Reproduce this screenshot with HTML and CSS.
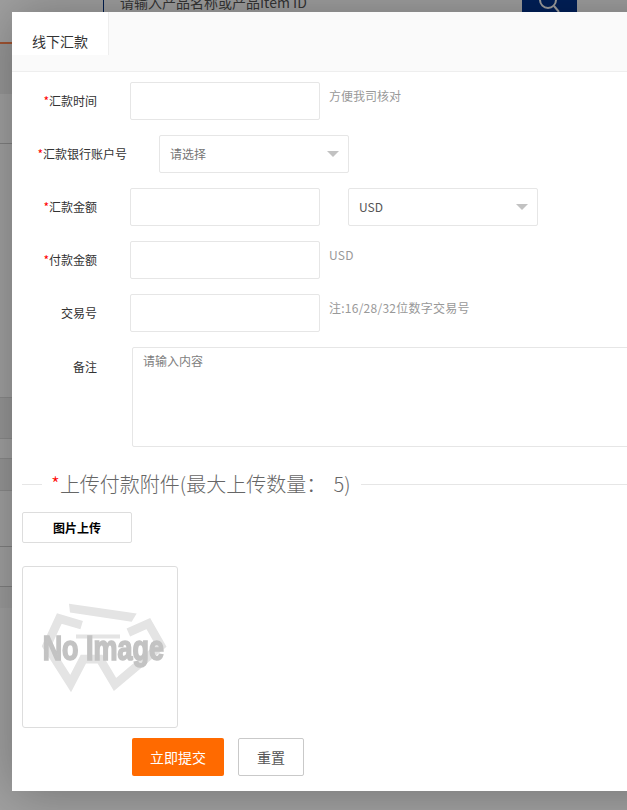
FILE: index.html
```html
<!DOCTYPE html>
<html lang="zh-CN">
<head>
<meta charset="utf-8">
<title>线下汇款</title>
<link rel="stylesheet" href="styles.css">
</head>
<body>
<div class="backdrop">
  <div class="search">
    <div class="search-box">请输入产品名称或产品Item ID</div>
    <div class="search-btn">
      <svg class="search-icon" viewBox="0 0 24 24"><circle cx="10" cy="0" r="8"/><path d="M16 6l5 6"/></svg>
    </div>
  </div>
  <div class="bg-accent"></div>
  <div class="bg-row bg-a"></div>
  <div class="bg-row bg-b"></div>
  <div class="bg-row bg-c"></div>
  <div class="bg-row bg-d"></div>
  <div class="bg-row bg-e"></div>
  <div class="bg-row bg-f"></div>
  <div class="bg-row bg-g"></div>
  <div class="bg-row bg-h"></div>
  <div class="bg-row bg-i"></div>
</div>
<div class="overlay"></div>
<div class="dialog">
  <div class="tabs"><div class="tab">线下汇款</div></div>
  <form class="form">
    <div class="row">
      <label class="label"><span class="req">*</span>汇款时间</label>
      <input class="input" type="text">
      <span class="hint">方便我司核对</span>
    </div>
    <div class="row">
      <label class="label label-wide"><span class="req">*</span>汇款银行账户号</label>
      <div class="select select-muted">请选择</div>
    </div>
    <div class="row">
      <label class="label"><span class="req">*</span>汇款金额</label>
      <input class="input" type="text">
      <div class="select select-side">USD</div>
    </div>
    <div class="row">
      <label class="label"><span class="req">*</span>付款金额</label>
      <input class="input" type="text">
      <span class="hint hint-num">USD</span>
    </div>
    <div class="row">
      <label class="label">交易号</label>
      <input class="input" type="text">
      <span class="hint hint-num">注:16/28/32位数字交易号</span>
    </div>
    <div class="row row-area">
      <label class="label label-area">备注</label>
      <textarea class="area" placeholder="请输入内容"></textarea>
    </div>
    <div class="legend">
      <span class="legend-line legend-short"></span>
      <span class="legend-text"><span class="req">*</span>上传付款附件(最大上传数量： 5)</span>
      <span class="legend-line legend-long"></span>
    </div>
    <button class="upload" type="button">图片上传</button>
    <div class="preview">
      <svg class="noimage" viewBox="66 33 468 485">
        <path class="ni-shape" d="M207 146L410 175L395 200L210 172Z"/>
        <path class="ni-line" d="M245 210L178 190L140 272L212 385L250 312L300 312L345 388L483 272L445 205L385 232"/>
        <path class="ni-bar" d="M228 238H360V250H228Z"/>
        <text class="ni-text" x="128" y="315" textLength="364" lengthAdjust="spacingAndGlyphs">No Image</text>
      </svg>
    </div>
    <div class="actions">
      <button class="btn btn-primary" type="button">立即提交</button>
      <button class="btn btn-plain" type="button">重置</button>
    </div>
  </form>
</div>
</body>
</html>
```

FILE: styles.css
```css
html, body {
  margin: 0;
  padding: 0;
  height: 810px;
  overflow: hidden;
  background: #fff;
  font-family: "Noto Sans CJK SC", "Noto Sans", sans-serif;
  font-size: 12px;
}

/* dimmed page behind the dialog */
.backdrop {
  position: absolute;
  inset: 0;
  overflow: hidden;
}
.search {
  height: 12px;
  position: relative;
  overflow: hidden;
}
.search-box {
  position: absolute;
  left: 103px;
  top: -10px;
  width: 419px;
  height: 40px;
  box-sizing: border-box;
  padding-left: 16px;
  border-left: 1px solid #00307f;
  font-size: 14px;
  line-height: 24px;
  color: #555;
}
.search-btn {
  position: absolute;
  left: 522px;
  top: 0;
  width: 55px;
  height: 12px;
  background: #00348f;
  overflow: hidden;
}
.search-icon {
  position: absolute;
  left: 16px;
  top: 0;
  width: 24px;
  height: 24px;
  fill: none;
  stroke: #fff;
  stroke-width: 2;
}
.bg-accent {
  margin-top: 30px;
  height: 2px;
  background: #ff8650;
}
.bg-row {
  border-bottom: 1px solid #ddd;
  box-sizing: border-box;
}
.bg-a { height: 50px; background: #f0f0f0; border: 0; }
.bg-b { height: 50px; background: #fff; border-bottom-color: #ccc; }
.bg-c { height: 254px; background: #fff; border-bottom-color: #ddd; }
.bg-d { height: 41px; background: #f0f0f0; }
.bg-e { height: 20px; background: #fff; }
.bg-f { height: 32px; background: #f0f0f0; }
.bg-g { height: 56px; background: #fff; border-bottom-color: #ccc; }
.bg-h { height: 40px; background: #fff; border-bottom-color: #ccc; }
.bg-i { height: 21px; background: #f8f8f8; border: 0; }

.overlay {
  position: absolute;
  inset: 0;
  background: rgba(0, 0, 0, 0.37);
}

/* dialog */
.dialog {
  position: absolute;
  left: 12px;
  top: 12px;
  width: 720px;
  height: 779px;
  background: #fff;
  box-shadow: 1px 1px 50px rgba(0, 0, 0, 0.3);
  color: #333;
}
.tabs {
  height: 60px;
  box-sizing: border-box;
  background: #fafafa;
  border-bottom: 1px solid #eee;
}
.tab {
  width: 97px;
  height: 43px;
  box-sizing: border-box;
  padding: 18px 0 0 20px;
  background: #fff;
  border-right: 1px solid #eee;
  font-size: 14px;
  line-height: 22px;
  color: #333;
}

.form {
  padding-top: 10px;
}
.row {
  display: flex;
  align-items: flex-start;
  height: 38px;
  margin-bottom: 15px;
}
.label {
  width: 85px;
  margin-right: 33px;
  flex: none;
  text-align: right;
  line-height: 38px;
  color: #333;
}
.label-wide {
  width: 115px;
  margin-right: 32px;
}
.req { color: #f00; }
.input {
  width: 190px;
  height: 38px;
  flex: none;
  box-sizing: border-box;
  margin: 0;
  padding: 0 10px;
  border: 1px solid #e6e6e6;
  border-radius: 2px;
  background: #fff;
  outline: 0;
}
.hint {
  margin-left: 9px;
  line-height: 28px;
  color: #999;
}
.hint-num {
  letter-spacing: 0.25px;
}
.select {
  position: relative;
  width: 190px;
  height: 38px;
  flex: none;
  box-sizing: border-box;
  padding-left: 10px;
  border: 1px solid #e6e6e6;
  border-radius: 2px;
  line-height: 36px;
  color: #555;
}
.select::after {
  content: "";
  position: absolute;
  right: 9px;
  top: 15px;
  border-style: solid;
  border-width: 6px 6px 0;
  border-color: #c2c2c2 transparent transparent;
}
.select-muted { color: #757575; }
.select-side { margin-left: 28px; }
.row-area {
  height: 100px;
  margin-bottom: 0;
}
.label-area {
  margin-right: 35px;
  line-height: 40px;
}
.area {
  display: block;
  width: 560px;
  height: 100px;
  flex: none;
  box-sizing: border-box;
  margin: 0;
  padding: 5px 10px;
  border: 1px solid #e6e6e6;
  border-radius: 2px;
  outline: 0;
  resize: none;
  font: 12px/16px "Noto Sans CJK SC", sans-serif;
}
.area::placeholder { color: #808080; opacity: 1; }

.legend {
  display: flex;
  align-items: center;
  height: 24px;
  margin: 25px 0 16px 10px;
  font-size: 20px;
  font-weight: 300;
  color: #666;
}
.legend-line {
  height: 1px;
  background: #e6e6e6;
}
.legend-short { width: 20px; margin-right: 9px; }
.legend-long { flex: 1; margin-left: 10px; }
.legend-text { white-space: pre; line-height: 24px; word-spacing: 3px; }

.upload {
  display: block;
  width: 110px;
  height: 31px;
  margin: 0 0 23px 10px;
  padding: 0;
  border: 1px solid #ddd;
  border-radius: 2px;
  background: #fff;
  font: bold 12px "Noto Sans CJK SC", sans-serif;
  color: #000;
}
.preview {
  width: 156px;
  height: 162px;
  margin-left: 10px;
  box-sizing: border-box;
  border: 1px solid #ddd;
  border-radius: 3px;
}
.noimage {
  display: block;
  width: 156px;
  height: 162px;
  margin: -1px;
  filter: blur(0.4px);
}
.ni-shape, .ni-bar { fill: #e4e4e4; }
.ni-line {
  fill: none;
  stroke: #e4e4e4;
  stroke-width: 26;
}
.ni-text {
  font-family: "Liberation Sans Narrow", "Liberation Sans", sans-serif;
  font-weight: bold;
  font-size: 104px;
  fill: #c3c3c3;
  stroke: #c3c3c3;
  stroke-width: 5;
}
.actions {
  display: flex;
  gap: 14px;
  margin: 10px 0 0 120px;
}
.btn {
  height: 38px;
  box-sizing: border-box;
  padding: 0;
  border-radius: 2px;
  font: 14px "Noto Sans CJK SC", sans-serif;
}
.btn-primary {
  width: 92px;
  border: 0;
  background: #ff6a00;
  color: #fff;
}
.btn-plain {
  width: 66px;
  border: 1px solid #c9c9c9;
  background: #fff;
  color: #555;
}
```
